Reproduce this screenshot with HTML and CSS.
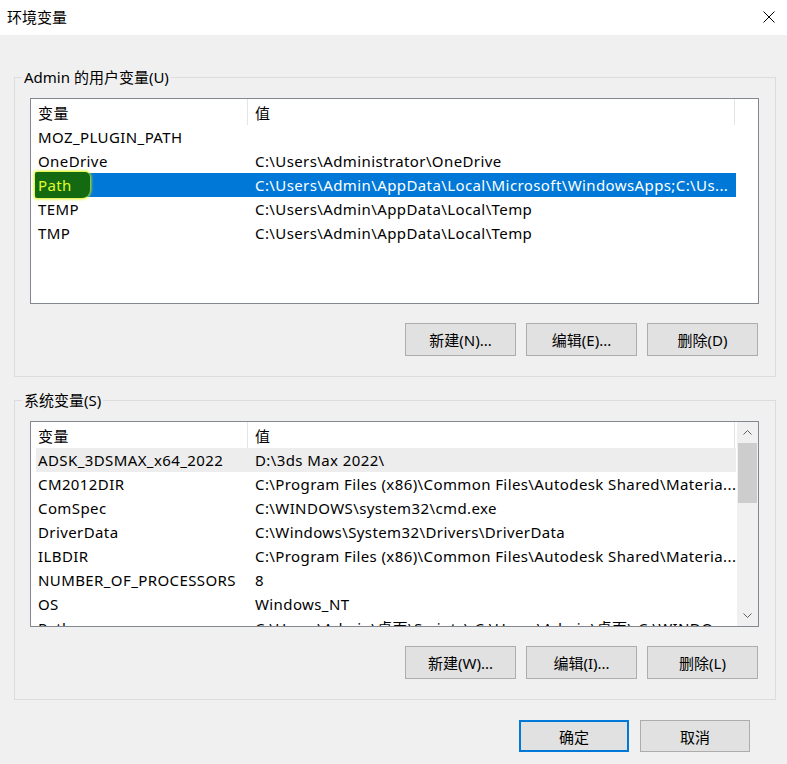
FILE: index.html
```html
<!DOCTYPE html>
<html lang="zh-CN">

<head>
    <meta charset="UTF-8">
    <meta name="viewport" content="width=device-width, initial-scale=1.0">
    <title>环境变量</title>

    <link rel="stylesheet" href="styles.css">
</head>

<body>
    <div class="dialog">
        <header class="titlebar">
            <span class="title">环境变量</span>
            <button class="close" aria-label="关闭">
                <svg width="12" height="12" viewBox="0 0 12 12">
                    <path d="M0.5 0.5 L11.5 11.5 M11.5 0.5 L0.5 11.5" stroke="#000" stroke-width="1" fill="none" />
                </svg>
            </button>
        </header>

        <fieldset class="group group-user">
            <legend>Admin 的用户变量(U)</legend>
            <div class="list">
                <div class="list-body">
                    <div class="list-head">
                        <span class="head-cell head-name">变量</span>
                        <span class="head-cell head-value">值</span>
                    </div>
                    <div class="row"><span class="name">MOZ_PLUGIN_PATH</span><span class="value"></span></div>
                    <div class="row"><span class="name">OneDrive</span><span class="value">C:\Users\Administrator\OneDrive</span></div>
                    <div class="row selected"><span class="name"><span class="marker">Path</span></span><span class="value">C:\Users\Admin\AppData\Local\Microsoft\WindowsApps;C:\Us...</span></div>
                    <div class="row"><span class="name">TEMP</span><span class="value">C:\Users\Admin\AppData\Local\Temp</span></div>
                    <div class="row"><span class="name">TMP</span><span class="value">C:\Users\Admin\AppData\Local\Temp</span></div>
                </div>
            </div>
            <div class="actions">
                <button class="btn">新建(N)...</button>
                <button class="btn">编辑(E)...</button>
                <button class="btn">删除(D)</button>
            </div>
        </fieldset>

        <fieldset class="group group-system">
            <legend>系统变量(S)</legend>
            <div class="list">
                <div class="list-body">
                    <div class="list-head">
                        <span class="head-cell head-name">变量</span>
                        <span class="head-cell head-value">值</span>
                    </div>
                    <div class="row hover"><span class="name">ADSK_3DSMAX_x64_2022</span><span class="value">D:\3ds Max 2022\</span></div>
                    <div class="row"><span class="name">CM2012DIR</span><span class="value">C:\Program Files (x86)\Common Files\Autodesk Shared\Materia...</span></div>
                    <div class="row"><span class="name">ComSpec</span><span class="value">C:\WINDOWS\system32\cmd.exe</span></div>
                    <div class="row"><span class="name">DriverData</span><span class="value">C:\Windows\System32\Drivers\DriverData</span></div>
                    <div class="row"><span class="name">ILBDIR</span><span class="value">C:\Program Files (x86)\Common Files\Autodesk Shared\Materia...</span></div>
                    <div class="row"><span class="name">NUMBER_OF_PROCESSORS</span><span class="value">8</span></div>
                    <div class="row"><span class="name">OS</span><span class="value">Windows_NT</span></div>
                    <div class="row"><span class="name">Path</span><span class="value">C:\Users\Admin\桌面\Scripts\;C:\Users\Admin\桌面\;C:\WINDO...</span></div>
                </div>
                <div class="scrollbar">
                    <div class="arrow">
                        <svg width="9" height="5" viewBox="0 0 9 5">
                            <polyline points="0.5,4.5 4.5,0.5 8.5,4.5" stroke="#606060" fill="none" />
                        </svg>
                    </div>
                    <div class="track">
                        <div class="thumb"></div>
                    </div>
                    <div class="arrow">
                        <svg width="9" height="5" viewBox="0 0 9 5">
                            <polyline points="0.5,0.5 4.5,4.5 8.5,0.5" stroke="#606060" fill="none" />
                        </svg>
                    </div>
                </div>
            </div>
            <div class="actions">
                <button class="btn">新建(W)...</button>
                <button class="btn">编辑(I)...</button>
                <button class="btn">删除(L)</button>
            </div>
        </fieldset>

        <footer class="footer">
            <button class="btn btn-default">确定</button>
            <button class="btn">取消</button>
        </footer>
    </div>
</body>

</html>
```

FILE: styles.css
```css
html,
body {
    padding: 0;
    margin: 0;
}

* {
    box-sizing: border-box;
}

body {
    width: 787px;
    height: 764px;
    overflow: hidden;
    background-color: #f0f0f0;
    color: #000;
    font-family: "Noto Sans", "Noto Sans CJK SC", sans-serif;
    font-size: 15px;
}

.dialog {
    width: 787px;
    height: 764px;
    display: flex;
    flex-direction: column;
}

/* title bar */

.titlebar {
    height: 35px;
    background-color: #fff;
    display: flex;
    align-items: center;
    justify-content: space-between;
    padding: 0 12px 0 7px;
}

.title {
    line-height: 20px;
    margin-top: -2px;
}

.close {
    border: none;
    background: none;
    padding: 0;
    width: 12px;
    height: 12px;
    display: flex;
    margin-top: -2px;
}

/* group boxes */

.group {
    margin: 32px 11px 0 14px;
    padding: 11px 16px 20px 15px;
    border: 1px solid #dcdcdc;
    min-width: 0;
}

.group-system {
    margin-top: 13px;
}

.group legend {
    padding: 0 2px;
    margin-left: -8px;
    line-height: 20px;
}

/* list views */

.list {
    height: 206px;
    border: 1px solid #828790;
    background-color: #fff;
    display: flex;
    overflow: hidden;
}

.list-body {
    flex: 1;
    min-width: 0;
    overflow: hidden;
    letter-spacing: 0.4px;
}

.list-head {
    display: flex;
    height: 26px;
    align-items: center;
}

.head-cell {
    height: 100%;
    display: flex;
    align-items: center;
    padding-left: 7px;
    border-right: 1px solid #e5e5e5;
}

.head-name {
    width: 217px;
}

.head-value {
    width: 487px;
}

.row {
    display: grid;
    grid-template-columns: 212px 488px;
    width: 700px;
    height: 24px;
    line-height: 24px;
    margin-left: 5px;
    white-space: nowrap;
}

.row .name {
    padding-left: 2px;
    overflow: visible;
}

.row .value {
    padding-left: 7px;
    overflow: hidden;
}

.row.selected {
    background-color: #0078d7;
    color: #fff;
}

.row.hover {
    background-color: #ededed;
}

/* highlighter stroke over the selected name */
.marker {
    display: inline-block;
    line-height: 26px;
    margin: -3px 0 0 -3px;
    padding: 0 18px 0 3px;
    background-color: #146a10;
    color: #e2fb2c;
    border-radius: 2px 5px 8px 2px;
    box-shadow: 0 0 3px 1px #d6f000;
}

.scrollbar {
    width: 21px;
    display: flex;
    flex-direction: column;
    background-color: #f0f0f0;
}

.arrow {
    height: 21px;
    display: flex;
    align-items: center;
    justify-content: center;
}

.track {
    flex: 1;
}

.thumb {
    height: 60px;
    background-color: #cdcdcd;
    margin: 0 1px;
}

/* buttons */

.actions {
    display: flex;
    justify-content: flex-end;
    gap: 10px;
    margin-top: 19px;
    padding-right: 1px;
}

.btn {
    width: 111px;
    height: 33px;
    border: 1px solid #adadad;
    background-color: #e1e1e1;
    font-family: inherit;
    font-size: 15px;
    color: #000;
    padding: 0;
}

.footer {
    display: flex;
    justify-content: flex-end;
    gap: 11px;
    margin: 20px 37px 0 0;
}

.footer .btn {
    width: 110px;
    height: 32px;
}

.footer .btn-default {
    border-color: #0078d7;
    box-shadow: inset 0 0 0 1px #0078d7;
}
```
